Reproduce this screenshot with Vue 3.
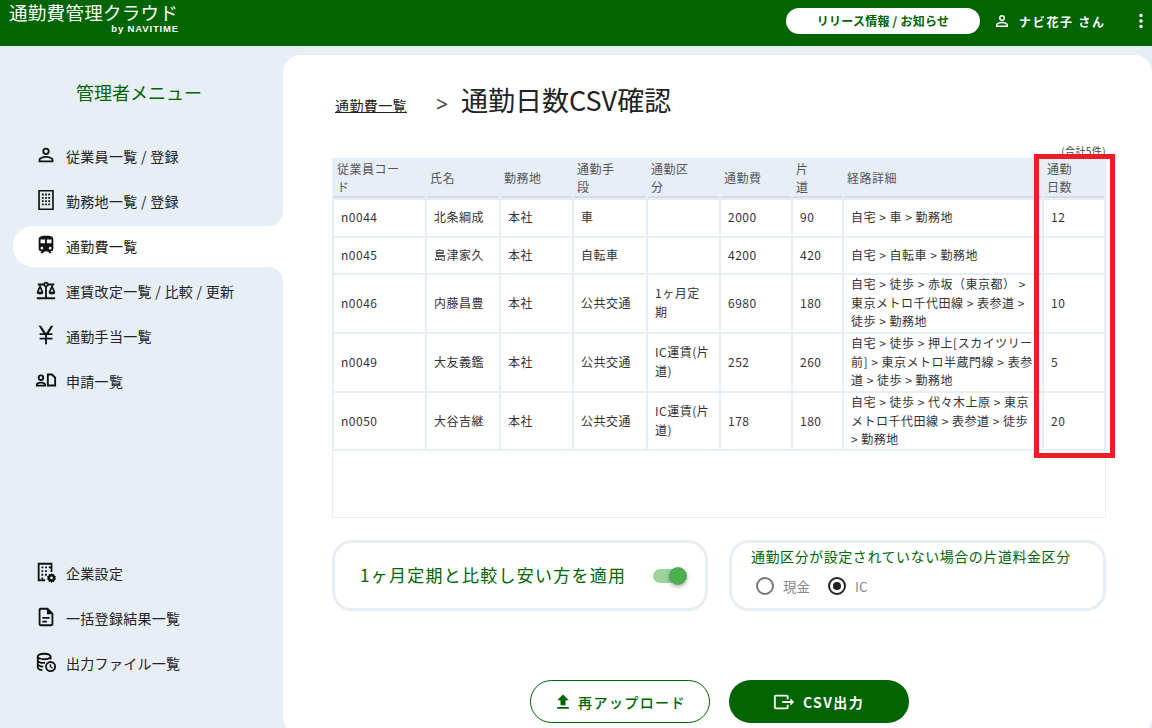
<script setup>
const icons = {
  person: 'M12,4A4,4 0 0,1 16,8A4,4 0 0,1 12,12A4,4 0 0,1 8,8A4,4 0 0,1 12,4M12,6A2,2 0 0,0 10,8A2,2 0 0,0 12,10A2,2 0 0,0 14,8A2,2 0 0,0 12,6M12,13C14.67,13 20,14.33 20,17V20H4V17C4,14.33 9.33,13 12,13M12,14.9C9.03,14.9 5.9,16.36 5.9,17V18.1H18.1V17C18.1,16.36 14.97,14.9 12,14.9Z',
  building: 'M3.5,1H20.5V23H3.5V1M5.3,2.8V21.2H18.7V2.8H5.3M7.5,5H9.5V7H7.5V5M11,5H13V7H11V5M14.5,5H16.5V7H14.5V5M7.5,8.6H9.5V10.6H7.5V8.6M11,8.6H13V10.6H11V8.6M14.5,8.6H16.5V10.6H14.5V8.6M7.5,12.2H9.5V14.2H7.5V12.2M11,12.2H13V14.2H11V12.2M14.5,12.2H16.5V14.2H14.5V12.2M7.5,15.8H9.5V17.8H7.5V15.8M11,15.8H13V17.8H11V15.8M14.5,15.8H16.5V17.8H14.5V15.8Z',
  train: 'M12,2C8,2 4,2.5 4,6V15.5A3.5,3.5 0 0,0 7.5,19L6,20.5V21H8.23L10.23,19H14L16,21H18V20.5L16.5,19A3.5,3.5 0 0,0 20,15.5V6C20,2.5 16.42,2 12,2M7.5,17A1.5,1.5 0 0,1 6,15.5A1.5,1.5 0 0,1 7.5,14A1.5,1.5 0 0,1 9,15.5A1.5,1.5 0 0,1 7.5,17M11,10H6V6H11V10M13,10V6H18V10H13M16.5,17A1.5,1.5 0 0,1 15,15.5A1.5,1.5 0 0,1 16.5,14A1.5,1.5 0 0,1 18,15.5A1.5,1.5 0 0,1 16.5,17Z',
  scale: 'M12,3C10.73,3 9.6,3.8 9.18,5H3V7H4.95L2,14C1.53,16 3,17 5.5,17C8,17 9.56,16 9,14L6.05,7H9.17C9.5,7.85 10.15,8.5 11,8.83V20H2V22H22V20H13V8.82C13.85,8.5 14.5,7.85 14.82,7H17.95L15,14C14.53,16 16,17 18.5,17C21,17 22.56,16 22,14L19.05,7H21V5H14.83C14.4,3.8 13.27,3 12,3M12,5A1,1 0 0,1 13,6A1,1 0 0,1 12,7A1,1 0 0,1 11,6A1,1 0 0,1 12,5M5.5,10.25L7,14H4L5.5,10.25M18.5,10.25L20,14H17L18.5,10.25Z',
  yen: 'M4,2H6.6L12,10L17.4,2H20L15,10H19V12H13V15H19V17H13V22H11V17H5V15H11V12H5V10H9L4,2Z',
  apply: 'M6.5,6A3.5,3.5 0 1,1 6.5,13A3.5,3.5 0 0,1 6.5,6M6.5,8A1.5,1.5 0 1,0 6.5,11A1.5,1.5 0 0,0 6.5,8M6.5,14C9,14 12,15.1 12,17V19H1V17C1,15.1 4,14 6.5,14M6.5,15.8C4.8,15.8 3,16.6 3,17.2H10C10,16.6 8.2,15.8 6.5,15.8M13,5H19L23,9V19H13V5M15,7V17H21V10L18,7H15Z',
  company: 'M3,2H19V12H17V4H5V20H11V22H3V2M7,6H9V8H7V6M11,6H13V8H11V6M15,6H17V8H15V6M7,10H9V12H7V10M11,10H13V12H11V10M7,14H9V16H7V14M11,14H13V16H11V14M7,18H9V19.5H7V18M18,13L19,14.5L20.8,14.2L21.3,16L23,17L22,18.5L23,20L21.3,21L20.8,22.8L19,22.5L18,24L17,22.5L15.2,22.8L14.7,21L13,20L14,18.5L13,17L14.7,16L15.2,14.2L17,14.5L18,13M18,17A1.5,1.5 0 1,0 18,20A1.5,1.5 0 0,0 18,17Z',
  file: 'M6,2H14L20,8V20A2,2 0 0,1 18,22H6A2,2 0 0,1 4,20V4A2,2 0 0,1 6,2M6,4V20H18V9H13V4H6M8,12H16V14H8V12M8,16H13V18H8V16Z',
  output: 'M10,2C14.4,2 18,3.6 18,6V9.2H16V8.7C14.5,9.6 12.3,10 10,10C7.7,10 5.5,9.6 4,8.7V10C4,11 6.5,12 10,12H11V14H10C7.7,14 5.5,13.6 4,12.7V14C4,15 6,16 9,16V18C6.8,18 5,17.6 4,16.7V18C4,18.6 5.4,19.5 8,19.9V21.9C4.6,21.5 2,20.1 2,18V6C2,3.6 5.6,2 10,2M10,4C6.5,4 4,5 4,6C4,7 6.5,8 10,8C13.5,8 16,7 16,6C16,5 13.5,4 10,4M17,11A6,6 0 1,1 17,23A6,6 0 0,1 17,11M17,13A4,4 0 1,0 17,21A4,4 0 0,0 17,13M16,14.5H17.5V16.8L19.5,18L18.8,19.2L16,17.5V14.5Z',
  dots: 'M12,16A2,2 0 0,1 14,18A2,2 0 0,1 12,20A2,2 0 0,1 10,18A2,2 0 0,1 12,16M12,10A2,2 0 0,1 14,12A2,2 0 0,1 12,14A2,2 0 0,1 10,12A2,2 0 0,1 12,10M12,4A2,2 0 0,1 14,6A2,2 0 0,1 12,8A2,2 0 0,1 10,6A2,2 0 0,1 12,4Z',
  upload: 'M9,16V10H5L12,3L19,10H15V16H9M5,20V18H19V20H5Z',
  exportFile: 'M23,12L19,8V11H10V13H19V16M1,18V6C1,4.89 1.9,4 3,4H15A2,2 0 0,1 17,6V9H15V6H3V18H15V15H17V18A2,2 0 0,1 15,20H3A2,2 0 0,1 1,18Z'
}

const topMenu = [
  { label: '従業員一覧 / 登録', icon: 'person' },
  { label: '勤務地一覧 / 登録', icon: 'building' },
  { label: '通勤費一覧', icon: 'train', active: true },
  { label: '運賃改定一覧 / 比較 / 更新', icon: 'scale' },
  { label: '通勤手当一覧', icon: 'yen' },
  { label: '申請一覧', icon: 'apply' }
]

const bottomMenu = [
  { label: '企業設定', icon: 'company' },
  { label: '一括登録結果一覧', icon: 'file' },
  { label: '出力ファイル一覧', icon: 'output' }
]

const columns = ['従業員コード', '氏名', '勤務地', '通勤手段', '通勤区分', '通勤費', '片道', '経路詳細', '通勤日数']

const rows = [
  { h: 'r1', cells: ['n0044', '北条綱成', '本社', '車', '', '2000', '90', '自宅 > 車 > 勤務地', '12'] },
  { h: 'r2', cells: ['n0045', '島津家久', '本社', '自転車', '', '4200', '420', '自宅 > 自転車 > 勤務地', ''] },
  { h: 'r3', cells: ['n0046', '内藤昌豊', '本社', '公共交通', '1ヶ月定期', '6980', '180', '自宅 > 徒歩 > 赤坂（東京都） > 東京メトロ千代田線 > 表参道 > 徒歩 > 勤務地', '10'] },
  { h: 'r3', cells: ['n0049', '大友義鑑', '本社', '公共交通', 'IC運賃(片道)', '252', '260', '自宅 > 徒歩 > 押上[スカイツリー前] > 東京メトロ半蔵門線 > 表参道 > 徒歩 > 勤務地', '5'] },
  { h: 'r5', cells: ['n0050', '大谷吉継', '本社', '公共交通', 'IC運賃(片道)', '178', '180', '自宅 > 徒歩 > 代々木上原 > 東京メトロ千代田線 > 表参道 > 徒歩 > 勤務地', '20'] }
]
</script>

<template>
  <div class="page">
    <header class="topbar">
      <div class="logo">
        <div class="logo-main">通勤費管理クラウド</div>
        <div class="logo-sub">by NAVITIME</div>
      </div>
      <div class="top-right">
        <button class="news-btn">リリース情報 / お知らせ</button>
        <svg class="user-icon" viewBox="0 0 24 24"><path :d="icons.person" /></svg>
        <span class="user-name">ナビ花子 さん</span>
        <svg class="dots-icon" viewBox="0 0 24 24"><path :d="icons.dots" /></svg>
      </div>
    </header>

    <div class="body">
      <aside class="sidebar">
        <div class="menu-title">管理者メニュー</div>
        <nav class="menu">
          <div v-for="item in topMenu" :key="item.label" class="menu-item" :class="{ active: item.active }">
            <svg class="menu-icon" viewBox="0 0 24 24"><path :d="icons[item.icon]" /></svg>
            <span>{{ item.label }}</span>
          </div>
        </nav>
        <nav class="menu menu-bottom">
          <div v-for="item in bottomMenu" :key="item.label" class="menu-item">
            <svg class="menu-icon" viewBox="0 0 24 24"><path :d="icons[item.icon]" /></svg>
            <span>{{ item.label }}</span>
          </div>
        </nav>
      </aside>

      <main class="content">
        <div class="crumbs">
          <a class="crumb-link">通勤費一覧</a>
          <span class="crumb-sep">&gt;</span>
          <h1 class="crumb-title">通勤日数CSV確認</h1>
        </div>

        <div class="total">(合計5件)</div>

        <div class="table-box">
          <table class="csv-table">
            <colgroup>
              <col class="c1" /><col class="c2" /><col class="c3" /><col class="c4" /><col class="c5" />
              <col class="c6" /><col class="c7" /><col class="c8" /><col class="c9" />
            </colgroup>
            <thead>
              <tr>
                <th v-for="col in columns" :key="col">{{ col }}</th>
              </tr>
            </thead>
            <tbody>
              <tr v-for="row in rows" :key="row.cells[0]" :class="row.h">
                <td v-for="(cell, i) in row.cells" :key="i">{{ cell }}</td>
              </tr>
            </tbody>
          </table>
          <div class="highlight"></div>
        </div>

        <div class="panels">
          <div class="panel panel-toggle">
            <span class="toggle-label">1ヶ月定期と比較し安い方を適用</span>
            <span class="toggle">
              <span class="toggle-track"></span>
              <span class="toggle-thumb"></span>
            </span>
          </div>
          <div class="panel panel-radio">
            <div class="radio-title">通勤区分が設定されていない場合の片道料金区分</div>
            <div class="radios">
              <label class="radio">
                <span class="radio-mark"></span>
                <span>現金</span>
              </label>
              <label class="radio">
                <span class="radio-mark checked"></span>
                <span>IC</span>
              </label>
            </div>
          </div>
        </div>

        <div class="actions">
          <button class="btn btn-outline">
            <svg viewBox="0 0 24 24"><path :d="icons.upload" /></svg>
            再アップロード
          </button>
          <button class="btn btn-solid">
            <svg viewBox="0 0 24 24"><path :d="icons.exportFile" /></svg>
            CSV出力
          </button>
        </div>
      </main>
    </div>
  </div>
</template>

<style>
html,
body {
  margin: 0;
  background: #e7eef5;
}
</style>

<style scoped>
.page {
  width: 1152px;
  height: 728px;
  overflow: hidden;
  background: #e7eef5;
  font-family: "Noto Sans CJK JP", "Noto Sans", sans-serif;
  color: #222;
}

.topbar {
  height: 46px;
  background: #006400;
  display: flex;
  justify-content: space-between;
  color: #fff;
}

.logo {
  padding: 0 0 0 9px;
  width: 170px;
}

.logo-main {
  font-size: 18.5px;
  line-height: 21px;
  letter-spacing: 0.3px;
  padding-top: 2px;
  white-space: nowrap;
}

.logo-sub {
  font-family: "Liberation Sans", sans-serif;
  font-size: 9.5px;
  font-weight: 700;
  line-height: 9px;
  letter-spacing: 0.85px;
  text-align: right;
  margin-top: 1px;
}

.top-right {
  display: flex;
  align-items: center;
  height: 42px;
}

.news-btn {
  width: 194px;
  height: 26px;
  border: none;
  border-radius: 13px;
  background: #fff;
  color: #006400;
  font: bold 12px "Noto Sans CJK JP", sans-serif;
  letter-spacing: 0.25px;
  padding: 0 0 2px;
}

.user-icon {
  width: 18px;
  height: 18px;
  margin-left: 13px;
  fill: #fff;
}

.user-name {
  font-size: 12px;
  font-weight: 700;
  letter-spacing: 1.7px;
  margin-left: 8px;
  width: 111px;
  white-space: nowrap;
}

.dots-icon {
  width: 22px;
  height: 22px;
  fill: #fff;
}

.body {
  display: flex;
  align-items: flex-start;
}

.sidebar {
  width: 283px;
  flex-shrink: 0;
  height: 682px;
  box-sizing: border-box;
  padding-top: 33px;
  background: #e7eef5;
}

.menu-title {
  text-align: center;
  font-size: 18px;
  line-height: 26px;
  color: #006400;
  margin-bottom: 31px;
  width: 278px;
}

.menu {
  display: flex;
  flex-direction: column;
  gap: 4px;
  padding-left: 13px;
}

.menu-bottom {
  margin-top: 151px;
}

.menu-item {
  position: relative;
  height: 41px;
  box-sizing: border-box;
  display: flex;
  align-items: center;
  padding-left: 22px;
  padding-bottom: 2px;
  font-size: 14px;
  letter-spacing: 0.3px;
  color: #222;
  border-radius: 20px 0 0 20px;
}

.menu-item.active {
  background: #fff;
}

/* concave corners joining the active row to the white page */
.menu-item.active::before,
.menu-item.active::after {
  content: "";
  position: absolute;
  right: 0;
  width: 14px;
  height: 14px;
}

.menu-item.active::before {
  bottom: 100%;
  background: radial-gradient(circle at 0 0, #e7eef5 13.5px, #fff 14px);
}

.menu-item.active::after {
  top: 100%;
  background: radial-gradient(circle at 0 100%, #e7eef5 13.5px, #fff 14px);
}

.menu-icon {
  width: 22px;
  height: 22px;
  flex-shrink: 0;
  margin-right: 9px;
  margin-top: -2px;
  fill: #111;
}

.content {
  width: 869px;
  height: 680px;
  margin-top: 9px;
  flex-shrink: 0;
  box-sizing: border-box;
  background: #fff;
  border-radius: 18px;
  padding: 27px 46px 0 49px;
}

.crumbs {
  height: 40px;
  display: flex;
  align-items: center;
  padding-left: 3px;
}

.crumb-link {
  font-size: 14px;
  letter-spacing: 0.4px;
  color: #222;
  text-decoration: underline;
  margin-top: 6px;
}

.crumb-sep {
  font-size: 21px;
  margin-left: 29px;
  margin-right: 13px;
  margin-top: 4px;
  color: #444;
  font-family: "Noto Sans", sans-serif;
}

.crumb-title {
  margin: -6px 0 0;
  font-size: 27px;
  font-weight: 400;
  color: #222;
}

.total {
  margin-top: 23px;
  width: 774px;
  text-align: right;
  font-size: 10px;
  line-height: 12px;
  letter-spacing: 0.4px;
  color: #444;
}

.table-box {
  position: relative;
  margin-top: 1px;
  width: 774px;
  height: 360px;
  box-shadow: inset 0 0 0 1px #e7eef5;
}

.csv-table {
  width: 774px;
  table-layout: fixed;
  border-collapse: separate;
  border-spacing: 2px;
  background: #e7eef5;
  font-size: 12px;
  line-height: 18.6px;
  letter-spacing: 0.5px;
  color: #333;
}

.c1 { width: 91px; }
.c2 { width: 72px; }
.c3 { width: 71px; }
.c4 { width: 72px; }
.c5 { width: 71px; }
.c6 { width: 70px; }
.c7 { width: 49px; }
.c8 { width: 198px; }
.c9 { width: 60px; }

.csv-table th {
  height: 38px;
  box-sizing: border-box;
  padding: 0 22px 0 3px;
  font-weight: 400;
  line-height: 18px;
  text-align: left;
  color: #555;
  border-bottom: 2px solid #d3dde5;
  background: #e7eef5;
}

.csv-table td {
  background: #fff;
  padding: 0 8px 1px 7px;
  vertical-align: middle;
}

.r1 td { height: 35px; }
.r2 td { height: 34px; }
.r3 td { height: 56px; }
.r5 td { height: 56px; padding-bottom: 0; }

.highlight {
  position: absolute;
  left: 702px;
  top: -4px;
  width: 81px;
  height: 304px;
  box-sizing: border-box;
  border: 5.5px solid #ee1c25;
}

.panels {
  display: flex;
  gap: 21px;
  margin-top: 22px;
}

.panel {
  height: 71px;
  box-sizing: border-box;
  border: 3px solid #e7eef5;
  border-radius: 20px;
  background: #fff;
}

.panel-toggle {
  width: 376px;
  display: flex;
  align-items: center;
  padding-left: 25px;
}

.toggle-label {
  font-size: 17px;
  letter-spacing: 1.25px;
  color: #006400;
  white-space: nowrap;
  padding-bottom: 3px;
}

.toggle {
  position: relative;
  width: 34px;
  height: 18px;
  margin-left: 27px;
}

.toggle-track {
  position: absolute;
  left: 0;
  top: 2px;
  width: 32px;
  height: 14px;
  border-radius: 7px;
  background: #4caf50;
  opacity: 0.55;
}

.toggle-thumb {
  position: absolute;
  left: 16px;
  top: 0;
  width: 18px;
  height: 18px;
  border-radius: 50%;
  background: #4caf50;
  box-shadow: 0 2px 4px rgba(0, 0, 0, 0.3);
}

.panel-radio {
  width: 377px;
  padding: 1px 0 0 19px;
}

.radio-title {
  font-size: 14px;
  line-height: 24px;
  letter-spacing: 0.55px;
  color: #006400;
  white-space: nowrap;
}

.radios {
  display: flex;
  gap: 18px;
  margin-top: 8px;
  padding-left: 5px;
}

.radio {
  display: flex;
  align-items: center;
  gap: 9px;
  font-size: 13.5px;
  line-height: 20px;
  color: #888;
}

.radio-mark {
  position: relative;
  width: 18px;
  height: 18px;
  box-sizing: border-box;
  border: 2px solid #777;
  border-radius: 50%;
}

.radio-mark.checked {
  border-color: #222;
}

.radio-mark.checked::after {
  content: "";
  position: absolute;
  left: 3px;
  top: 3px;
  width: 8px;
  height: 8px;
  border-radius: 50%;
  background: #222;
}

.actions {
  display: flex;
  justify-content: center;
  gap: 19px;
  margin-top: 69px;
}

.btn {
  width: 180px;
  height: 43px;
  box-sizing: border-box;
  border-radius: 22px;
  display: flex;
  align-items: center;
  justify-content: center;
  gap: 5px;
  font: 700 14px "Noto Sans CJK JP", sans-serif;
  letter-spacing: 1.4px;
  padding: 0;
}

.btn svg {
  width: 20px;
  height: 20px;
}

.btn-outline {
  background: #fff;
  border: 1px solid #006400;
  color: #006400;
  font-weight: 500;
}

.btn-outline svg {
  fill: #006400;
}

.btn-solid {
  background: #006400;
  border: none;
  color: #fff;
  gap: 8px;
}

.btn-solid svg {
  width: 22px;
  height: 22px;
  fill: #fff;
}
</style>
